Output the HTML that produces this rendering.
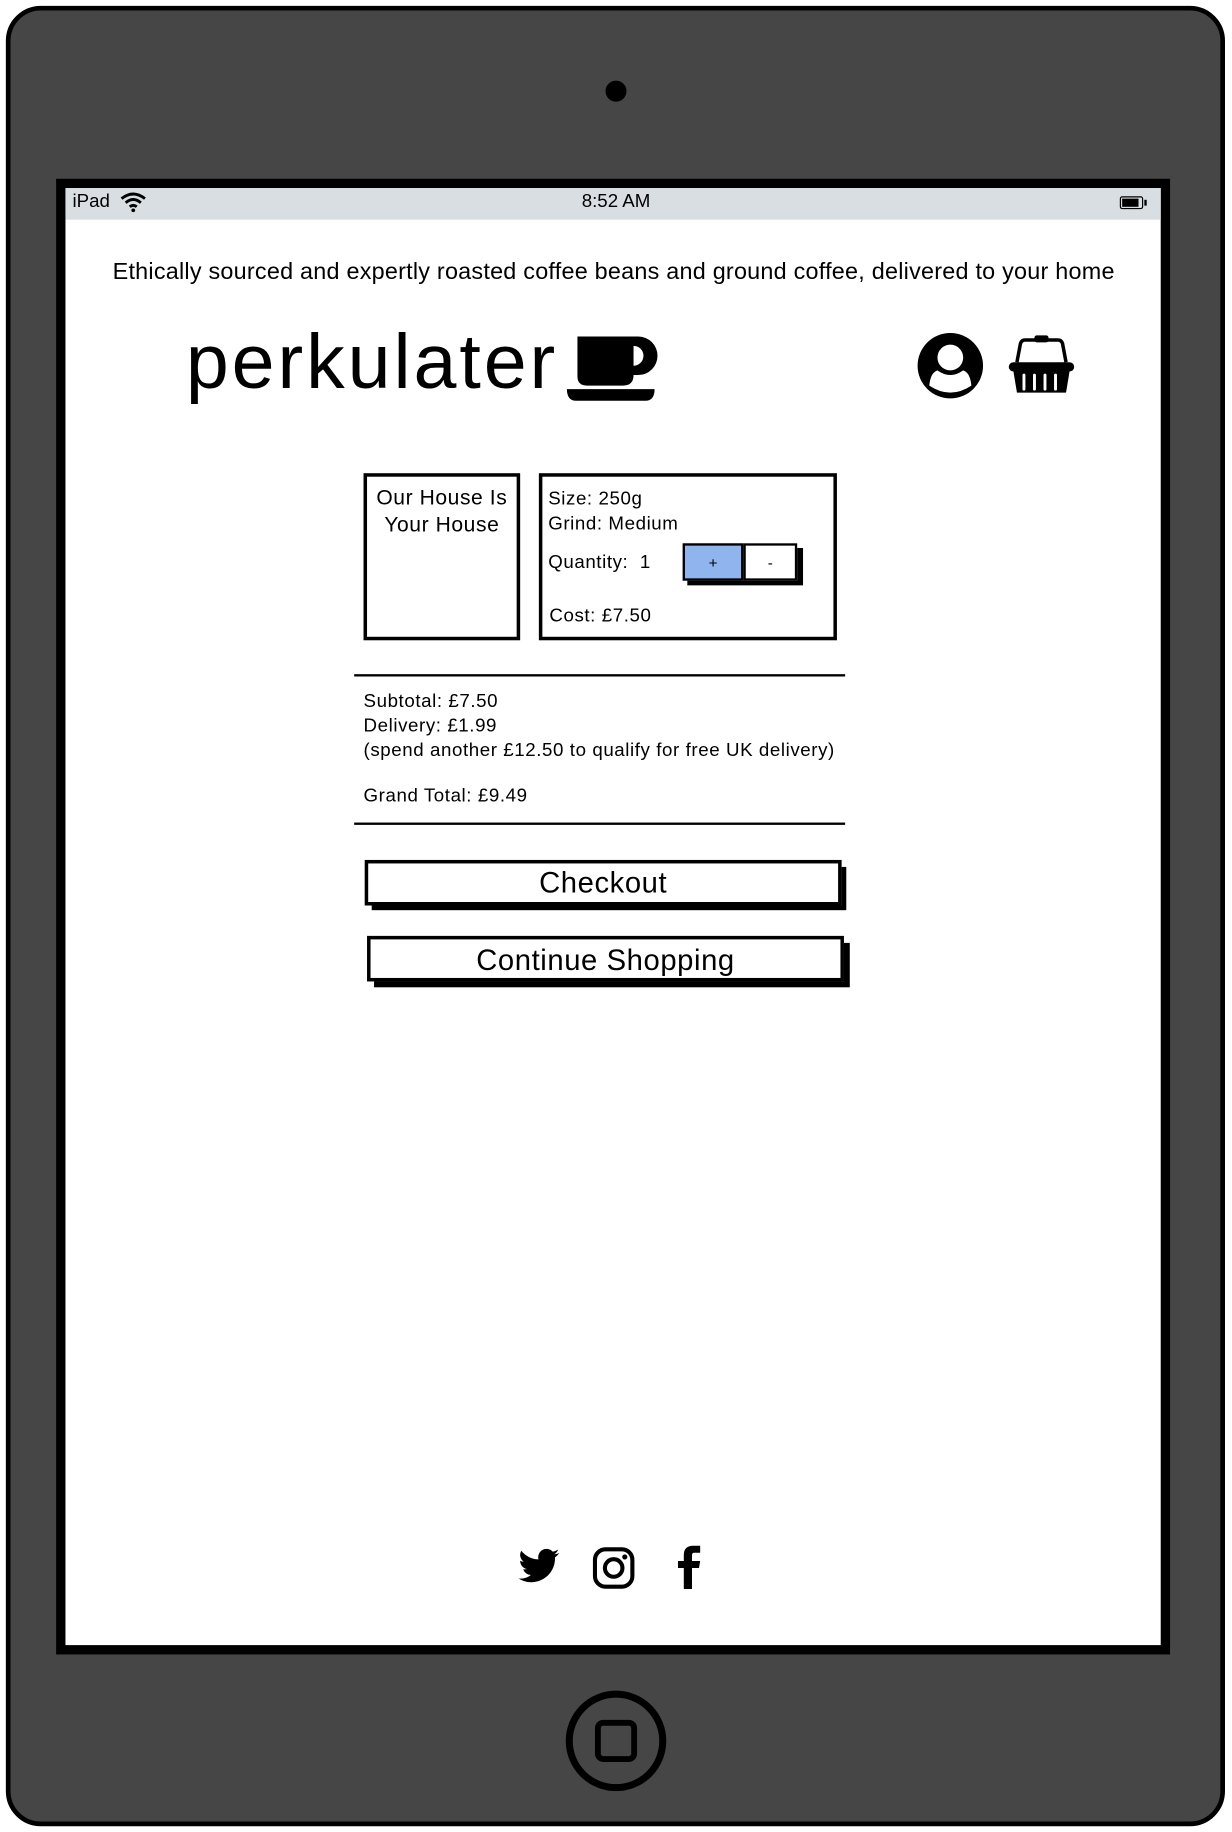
<!DOCTYPE html>
<html><head><meta charset="utf-8"><style>
html,body{margin:0;padding:0;background:#fff;overflow:hidden}
#w{position:absolute;left:0;top:0;width:1054px;height:1568px;transform-origin:0 0;transform:scale(1.1689,1.1684);font-family:"Liberation Sans",sans-serif;color:#000}
.a{position:absolute}
.box{position:absolute;border:3px solid #000;box-sizing:border-box;background:#fff}
.t{letter-spacing:0.5px}
</style></head><body><div id="w">
<div class="a" style="left:5px;top:5px;width:1043px;height:1558px;background:#464646;border:4px solid #000;border-radius:30px;box-sizing:border-box"></div>
<div class="a" style="left:518px;top:69px;width:18px;height:18px;border-radius:50%;background:#000"></div>
<div class="a" style="left:48px;top:153px;width:953px;height:1263px;background:#000"></div>
<div class="a" style="left:56px;top:161px;width:937px;height:1247px;background:#fff"></div>
<div class="a" style="left:56px;top:161px;width:937px;height:27px;background:#d9dee2"></div>
<div class="a" style="left:62px;top:164px;font-size:16px">iPad</div>
<svg class="a" style="left:102px;top:164px" width="24" height="18" viewBox="0 0 24 18"><path d="M2 6 Q12 -2 22 6" stroke="#000" stroke-width="2.5" fill="none"/><path d="M5.5 9.5 Q12 4 18.5 9.5" stroke="#000" stroke-width="2.5" fill="none"/><path d="M9 13 Q12 10.5 15 13" stroke="#000" stroke-width="2.5" fill="none"/><circle cx="12" cy="16" r="1.6"/></svg>
<div class="a" style="left:0;width:1054px;top:164px;text-align:center;font-size:16px">8:52 AM</div>
<div class="a" style="left:958px;top:168px;width:20px;height:11px;border:1.5px solid #000;border-radius:2px;box-sizing:border-box"></div>
<div class="a" style="left:960px;top:170px;width:14px;height:7px;background:#000"></div>
<div class="a" style="left:979px;top:171px;width:2px;height:5px;background:#000"></div>
<div class="a" style="left:0;width:1050px;top:222px;text-align:center;font-size:20px;letter-spacing:0.2px">Ethically sourced and expertly roasted coffee beans and ground coffee, delivered to your home</div>
<div class="a" style="left:159px;top:271px;font-size:66px;letter-spacing:2.5px">perkulater</div>
<svg class="a" style="left:484px;top:283px" width="80" height="62" viewBox="0 0 80 62"><path d="M10 5 H62 A14 14 0 0 1 62 38 H58 Q58 47 49 47 H18 Q10 47 10 39 Z M58 13 V30 A8.5 8.5 0 0 0 58 13 Z" fill="#000" fill-rule="evenodd"/><path d="M1 50 H76 Q76 60 68 60 H9 Q1 60 1 50 Z"/></svg>
<svg class="a" style="left:784px;top:284px" width="58" height="58" viewBox="0 0 58 58"><circle cx="29" cy="29" r="28" fill="#000"/><circle cx="29" cy="22" r="11" fill="#fff"/><path d="M11 46 Q12 35 18 33 Q29 41 40 33 Q46 35 47 46 Q29 58 11 46 Z" fill="#fff"/></svg>
<svg class="a" style="left:862px;top:286px" width="58" height="54" viewBox="0 0 58 54"><path d="M8 24 L11 8 Q12 5 15 5 H43 Q46 5 47 8 L50 24" stroke="#000" stroke-width="3" fill="none"/><rect x="23" y="1" width="12" height="6" rx="2"/><rect x="1" y="24" width="56" height="8" rx="4"/><path d="M5 32 H53 L50 50 H8 Z"/><path d="M14 35 V47 M23 35 V47 M32 35 V47 M41 35 V47" stroke="#fff" stroke-width="2.5" stroke-linecap="round"/></svg>
<div class="box" style="left:311px;top:405px;width:134px;height:143px"></div>
<div class="a t" style="left:311px;top:415px;width:134px;text-align:center;font-size:18px;line-height:23px">Our House Is<br>Your House</div>
<div class="box" style="left:461px;top:405px;width:255px;height:143px"></div>
<div class="a t" style="left:469px;top:417px;font-size:16px;line-height:21px">Size: 250g<br>Grind: Medium</div>
<div class="a t" style="left:469px;top:473px;font-size:16px">Quantity:&nbsp; 1</div>
<div class="a t" style="left:470px;top:519px;font-size:16px">Cost: £7.50</div>
<div class="a" style="left:588px;top:469px;width:99px;height:32px;background:#000"></div>
<div class="a" style="left:584px;top:465px;width:52px;height:32px;background:#8fb4ee;border:2px solid #000;box-sizing:border-box;text-align:center;font-size:13px;line-height:30px">+</div>
<div class="a" style="left:636px;top:465px;width:46px;height:32px;background:#fff;border:2px solid #000;box-sizing:border-box;text-align:center;font-size:13px;line-height:30px">-</div>
<div class="a" style="left:303px;top:577px;width:420px;height:2px;background:#000"></div>
<div class="a t" style="left:311px;top:590px;font-size:16px;line-height:21px">Subtotal: £7.50<br>Delivery: £1.99<br>(spend another £12.50 to qualify for free UK delivery)</div>
<div class="a t" style="left:311px;top:673px;font-size:16px">Grand Total: £9.49</div>
<div class="a" style="left:303px;top:704px;width:420px;height:2px;background:#000"></div>
<div class="a" style="left:318px;top:742px;width:406px;height:37px;background:#000"></div>
<div class="box t" style="left:312px;top:736px;width:408px;height:39px;text-align:center;font-size:25px;line-height:34px">Checkout</div>
<div class="a" style="left:320px;top:807px;width:407px;height:38px;background:#000"></div>
<div class="box t" style="left:314px;top:801px;width:408px;height:39px;text-align:center;font-size:25px;line-height:36px">Continue Shopping</div>
<svg class="a" style="left:442px;top:1324px" width="38" height="34" viewBox="0 0 24 20"><path d="M23 2.5c-.8.4-1.7.6-2.6.7.9-.6 1.6-1.4 2-2.5-.9.5-1.9.9-2.900 1.1A4.5 4.5 0 0 0 11.8 6 12.8 12.8 0 0 1 2.5 1.3a4.5 4.5 0 0 0 1.4 6 4.5 4.5 0 0 1-2-.6 4.5 4.5 0 0 0 3.6 4.5 4.5 4.5 0 0 1-2 .1 4.5 4.5 0 0 0 4.2 3.1A9 9 0 0 1 1 16.3a12.8 12.8 0 0 0 19.7-11.4c.9-.6 1.6-1.4 2.3-2.4z"/></svg>
<svg class="a" style="left:506px;top:1323px" width="38" height="38" viewBox="0 0 38 38"><rect x="3" y="3" width="32" height="32" rx="9" stroke="#000" stroke-width="3.5" fill="none"/><circle cx="19" cy="19" r="7.5" stroke="#000" stroke-width="3.5" fill="none"/><circle cx="28.5" cy="9.5" r="2.2"/></svg>
<svg class="a" style="left:578px;top:1322px" width="24" height="38" viewBox="0 0 24 38"><path d="M7 38 V20 H2 V14 H7 V9 Q7 1 15 1 H21 V7 H16 Q14 7 14 9 V14 H21 L20 20 H14 V38 Z"/></svg>
<div class="a" style="left:484px;top:1447px;width:86px;height:86px;border:6px solid #000;border-radius:50%;box-sizing:border-box"></div>
<div class="a" style="left:509px;top:1472px;width:36px;height:36px;border:5px solid #000;border-radius:7px;box-sizing:border-box"></div>
</div></body></html>
